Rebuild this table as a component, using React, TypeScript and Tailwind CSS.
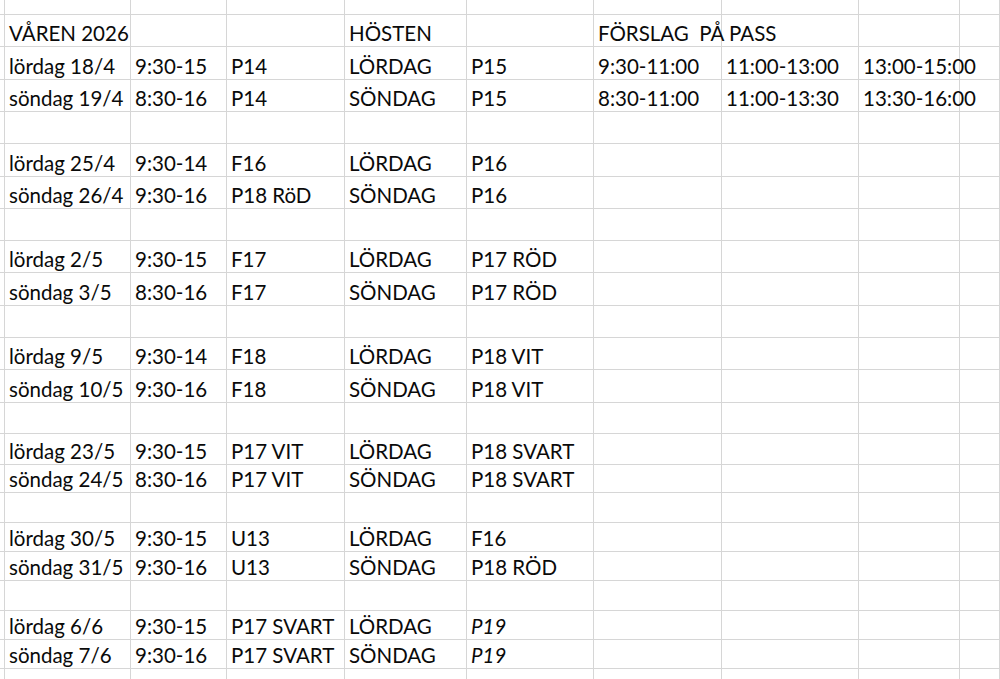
import React from 'react'

type Cell = string | { text: string; italic?: boolean }

// column widths measured from the gridlines
const cols = [
  'w-[5px]',
  'w-[126px]',
  'w-[96px]',
  'w-[118px]',
  'w-[122px]',
  'w-[127px]',
  'w-[128px]',
  'w-[137px]',
  'w-[101px]',
  'w-[40px]',
]

// row heights, the first and last rows are cut off by the window
const rows: { h: string; cells: Cell[] }[] = [
  { h: 'h-[15px]', cells: [] },
  { h: 'h-[32px]', cells: ['', 'VÅREN 2026', '', '', 'HÖSTEN', '', 'FÖRSLAG  PÅ PASS'] },
  { h: 'h-[33px]', cells: ['', 'lördag 18/4', '9:30-15', 'P14', 'LÖRDAG', 'P15', '9:30-11:00', '11:00-13:00', '13:00-15:00'] },
  { h: 'h-[32px]', cells: ['', 'söndag 19/4', '8:30-16', 'P14', 'SÖNDAG', 'P15', '8:30-11:00', '11:00-13:30', '13:30-16:00'] },
  { h: 'h-[32px]', cells: [] },
  { h: 'h-[33px]', cells: ['', 'lördag 25/4', '9:30-14', 'F16', 'LÖRDAG', 'P16'] },
  { h: 'h-[32px]', cells: ['', 'söndag 26/4', '9:30-16', 'P18 RöD', 'SÖNDAG', 'P16'] },
  { h: 'h-[32px]', cells: [] },
  { h: 'h-[32px]', cells: ['', 'lördag 2/5', '9:30-15', 'F17', 'LÖRDAG', 'P17 RÖD'] },
  { h: 'h-[33px]', cells: ['', 'söndag 3/5', '8:30-16', 'F17', 'SÖNDAG', 'P17 RÖD'] },
  { h: 'h-[32px]', cells: [] },
  { h: 'h-[32px]', cells: ['', 'lördag 9/5', '9:30-14', 'F18', 'LÖRDAG', 'P18 VIT'] },
  { h: 'h-[33px]', cells: ['', 'söndag 10/5', '9:30-16', 'F18', 'SÖNDAG', 'P18 VIT'] },
  { h: 'h-[31px]', cells: [] },
  { h: 'h-[31px]', cells: ['', 'lördag 23/5', '9:30-15', 'P17 VIT', 'LÖRDAG', 'P18 SVART'] },
  { h: 'h-[28px]', cells: ['', 'söndag 24/5', '8:30-16', 'P17 VIT', 'SÖNDAG', 'P18 SVART'] },
  { h: 'h-[30px]', cells: [] },
  { h: 'h-[29px]', cells: ['', 'lördag 30/5', '9:30-15', 'U13', 'LÖRDAG', 'F16'] },
  { h: 'h-[29px]', cells: ['', 'söndag 31/5', '9:30-16', 'U13', 'SÖNDAG', 'P18 RÖD'] },
  { h: 'h-[30px]', cells: [] },
  { h: 'h-[29px]', cells: ['', 'lördag 6/6', '9:30-15', 'P17 SVART', 'LÖRDAG', { text: 'P19', italic: true }] },
  { h: 'h-[29px]', cells: ['', 'söndag 7/6', '9:30-16', 'P17 SVART', 'SÖNDAG', { text: 'P19', italic: true }] },
  { h: 'h-[30px]', cells: [] },
]

export default function App() {
  return (
    <div className="h-[679px] w-[1000px] overflow-hidden bg-white font-['Lato',sans-serif] text-[20.5px] text-[#0a0a0a]">
      {rows.map((row, r) => (
        <div key={r} className={`flex ${row.h}`}>
          {cols.map((w, c) => {
            const cell = row.cells[c]
            const text = typeof cell === 'string' ? cell : cell?.text
            const italic = typeof cell === 'object' && cell?.italic
            return (
              <div
                key={c}
                className={`flex shrink-0 items-end overflow-visible whitespace-pre border-b border-r border-[#d6d6d6] pb-[3px] pl-[4px] leading-none ${w}`}
              >
                <span className={italic ? 'italic' : ''}>{text}</span>
              </div>
            )
          })}
        </div>
      ))}
    </div>
  )
}
